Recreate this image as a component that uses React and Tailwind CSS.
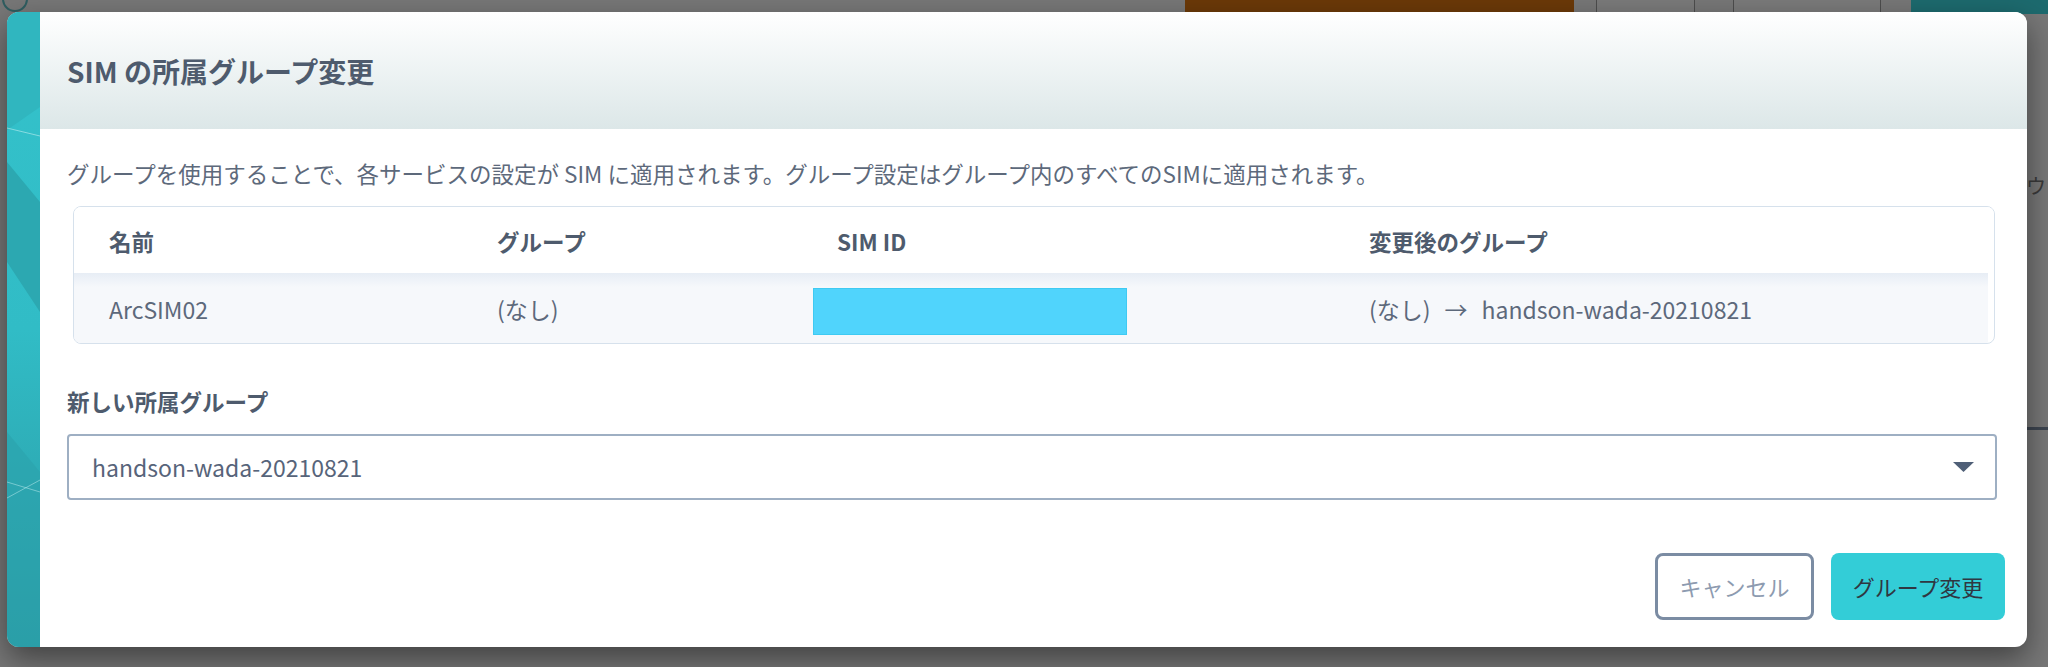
import React from "react";

const columns = [
  { key: "name", label: "名前", width: "w-[388px]" },
  { key: "group", label: "グループ", width: "w-[340px]" },
  { key: "simId", label: "SIM ID", width: "w-[532px]" },
  { key: "next", label: "変更後のグループ", width: "flex-1" },
];

const row = {
  name: "ArcSIM02",
  group: "(なし)",
  next: "handson-wada-20210821",
};

const TealStrip = () => (
  <svg
    className="h-full w-full"
    viewBox="0 0 33 635"
    preserveAspectRatio="none"
  >
    <defs>
      <linearGradient id="strip" x1="0" y1="0" x2="0" y2="1">
        <stop offset="0" stopColor="#34c2cb" />
        <stop offset="0.5" stopColor="#31bcc6" />
        <stop offset="1" stopColor="#2a9aa3" />
      </linearGradient>
    </defs>
    <rect width="33" height="635" fill="url(#strip)" />
    <polygon points="0,0 33,0 33,95 0,118" fill="#30b6bf" />
    <polygon points="0,150 33,190 33,300 0,250" fill="#2ca8b1" />
    <polygon points="0,420 33,460 33,635 0,635" fill="#2ba2ab" opacity="0.6" />
    <line x1="0" y1="116" x2="33" y2="124" stroke="#bfeef1" strokeWidth="1" opacity="0.6" />
    <line x1="0" y1="470" x2="33" y2="480" stroke="#bfeef1" strokeWidth="1" opacity="0.5" />
    <line x1="0" y1="486" x2="33" y2="468" stroke="#bfeef1" strokeWidth="1" opacity="0.5" />
  </svg>
);

export default function App() {
  return (
    <div className="relative h-[667px] w-[2048px] overflow-hidden bg-[#777777] font-['Noto_Sans_CJK_JP',sans-serif]">
      {/* page behind the overlay */}
      <div className="flex h-[14px] items-stretch">
        <div className="ml-[2px] mt-[-14px] h-[26px] w-[26px] rounded-full border-2 border-[#2f5d60]"></div>
        <div className="flex-1"></div>
        <div className="w-[389px] bg-[#6b3908]"></div>
        <div className="ml-[22px] w-[99px] border-x border-[#4d4d4d] bg-[#7a7a7a]"></div>
        <div className="ml-[38px] w-[148px] border-x border-[#4d4d4d] bg-[#7a7a7a]"></div>
        <div className="ml-[30px] w-[137px] bg-[#1d6a6e]"></div>
      </div>
      <div className="absolute right-0 top-[427px] h-[3px] w-[22px] bg-[#3d4550]"></div>
      <div className="absolute right-[2px] top-[176px] text-[20px] leading-none text-[#3a3a3a]">
        ダウ
      </div>

      {/* modal */}
      <div className="absolute left-[7px] top-[12px] flex h-[635px] w-[2020px] overflow-hidden rounded-[12px] bg-white shadow-[0_12px_30px_rgba(0,0,0,0.45)]">
        <div className="w-[33px] shrink-0">
          <TealStrip />
        </div>

        <div className="flex min-w-0 flex-1 flex-col">
          {/* header */}
          <div className="flex h-[117px] items-center bg-gradient-to-b from-white to-[#dce7e8] px-[27px]">
            <h1 className="text-[28px] font-bold leading-none text-[#4e5b6d]">
              SIM の所属グループ変更
            </h1>
          </div>

          {/* body */}
          <div className="flex flex-1 flex-col pl-[27px] pr-[23px] pt-[28px] pb-[26px]">
            <p className="text-[22.5px] leading-[33px] text-[#5d697b]">
              グループを使用することで、各サービスの設定が SIM に適用されます。グループ設定はグループ内のすべてのSIMに適用されます。
            </p>

            <div className="ml-[6px] mr-[9px] mt-[16px] overflow-hidden rounded-[8px] border border-[#d6e1ec]">
              <div className="flex h-[66px] items-center bg-white">
                {columns.map((col) => (
                  <div
                    key={col.key}
                    className={`${col.width} pl-[35px] pt-[4px] text-[22.5px] font-bold text-[#4e5b6d]`}
                  >
                    {col.label}
                  </div>
                ))}
              </div>
              <div className="mr-[6px] flex h-[70px] items-center bg-[linear-gradient(#e7edf5,#f6f8fb_14px)] text-[23px] text-[#5d697b]">
                <div className="w-[388px] pl-[35px] pt-[2px]">{row.name}</div>
                <div className="w-[340px] pl-[35px] pt-[2px]">{row.group}</div>
                <div className="w-[532px] pl-[11px] pt-[6px]">
                  <div className="h-[47px] w-[314px] border border-[#3fcaf2] bg-[#50d4fc]"></div>
                </div>
                <div className="flex flex-1 items-center pl-[35px] pt-[2px]">
                  <span>(なし)</span>
                  <span className="mx-[14px]">→</span>
                  <span>{row.next}</span>
                </div>
              </div>
            </div>

            <label className="mt-[41px] text-[22.5px] font-bold leading-[33px] text-[#4e5b6d]">
              新しい所属グループ
            </label>

            <div className="mr-[7px] mt-[16px] flex h-[66px] items-center justify-between rounded-[4px] border-2 border-[#9eafc3] pl-[23px] pr-[21px]">
              <span className="text-[23px] text-[#57647a]">
                handson-wada-20210821
              </span>
              <svg width="21" height="10" viewBox="0 0 21 10">
                <polygon points="0,0 21,0 10.5,10" fill="#4f5f77" />
              </svg>
            </div>

            <div className="mr-[-1px] mt-[53px] flex justify-end gap-[17px]">
              <button className="h-[67px] w-[159px] rounded-[8px] border-[3px] border-[#7b8ca3] bg-white text-[22px] text-[#8d9bb0]">
                キャンセル
              </button>
              <button className="h-[67px] w-[174px] rounded-[8px] bg-[#33cdd7] text-[22px] text-[#2f3742]">
                グループ変更
              </button>
            </div>
          </div>
        </div>
      </div>
    </div>
  );
}
